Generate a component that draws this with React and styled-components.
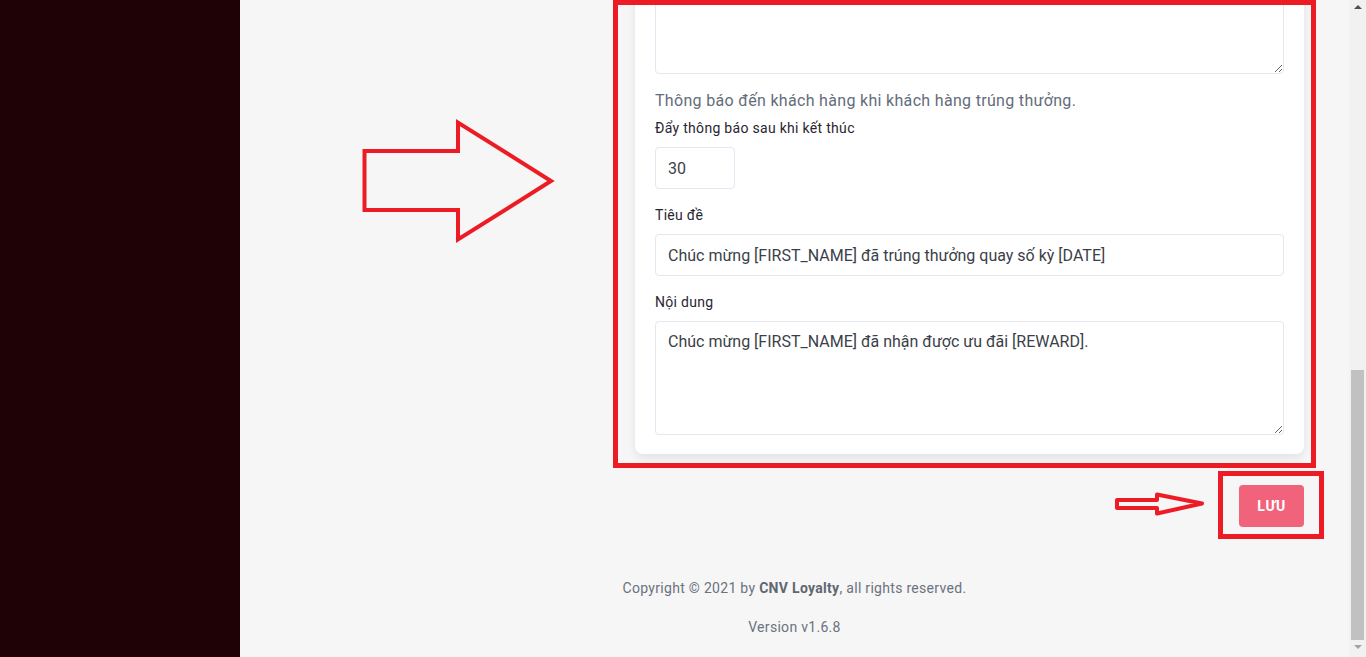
import React from "react";
import styled, { createGlobalStyle } from "styled-components";

const Global = createGlobalStyle`
  html, body { margin: 0; padding: 0; height: 100%; overflow: hidden; }
  body { font-family: Roboto, "Noto Sans", Arial, sans-serif; background: #f6f6f6; }
  * { box-sizing: border-box; }
`;

const Layout = styled.div`
  display: grid;
  grid-template-columns: 240px 1fr 17px;
  width: 1366px;
  height: 657px;
  overflow: hidden;
`;

const Sidebar = styled.aside`
  background: #1e0206;
`;

const Main = styled.main`
  position: relative;
  background: #f6f6f6;
  display: flex;
  flex-direction: column;
  overflow: hidden;
`;

const Scrolled = styled.div`
  margin-top: -60px;
  display: flex;
  flex-direction: column;
`;

const ContentGrid = styled.div`
  display: grid;
  grid-template-columns: 1fr 669px;
  padding: 0 45px 0 45px;
`;

const Card = styled.section`
  grid-column: 2;
  background: #fff;
  border-radius: 8px;
  box-shadow: 0 4px 10px rgba(0, 0, 0, 0.08);
  padding: 20px 20px 19px;
  display: flex;
  flex-direction: column;
`;

const TextArea = styled.textarea`
  display: block;
  width: 100%;
  height: ${(p) => p.$h}px;
  border: 1px solid #e3e7ef;
  border-radius: 4px;
  padding: 10px 12px;
  font-family: Roboto, "Noto Sans", Arial, sans-serif;
  font-size: 16px;
  line-height: 20px;
  color: #3b3f48;
  resize: vertical;
  outline: none;
  background: #fff;
`;

const Input = styled.input`
  display: block;
  width: ${(p) => p.$w || "100%"};
  height: 42px;
  border: 1px solid #e3e7ef;
  border-radius: 4px;
  padding: 0 12px;
  font-family: Roboto, "Noto Sans", Arial, sans-serif;
  font-size: 16px;
  color: #3b3f48;
  outline: none;
  background: #fff;
`;

const Helper = styled.div`
  margin-top: 15px;
  font-size: 16px;
  line-height: 24px;
  letter-spacing: 0.32px;
  color: #646c7a;
`;

const Label = styled.label`
  display: block;
  font-size: 14px;
  line-height: 21px;
  letter-spacing: 0.3px;
  color: #2a2530;
  margin-top: ${(p) => p.$mt || 0}px;
  margin-bottom: 8px;
`;

const Actions = styled.div`
  display: flex;
  justify-content: flex-end;
  padding: 31px 45px 0;
`;

const SaveButton = styled.button`
  width: 65px;
  height: 42px;
  border: none;
  border-radius: 4px;
  background: #f1637b;
  color: #fff;
  font-family: Roboto, "Noto Sans", Arial, sans-serif;
  font-weight: 700;
  font-size: 14px;
  letter-spacing: 0.6px;
  cursor: pointer;
`;

const Footer = styled.footer`
  display: flex;
  flex-direction: column;
  align-items: center;
  gap: 18px;
  padding-top: 51px;
  font-size: 14px;
  line-height: 21px;
  letter-spacing: 0.3px;
  color: #6b7280;
  b { font-weight: 700; color: #5f6672; }
`;

const RedBox = styled.div`
  position: absolute;
  left: ${(p) => p.$x}px;
  top: ${(p) => p.$y}px;
  width: ${(p) => p.$w}px;
  height: ${(p) => p.$h}px;
  border: 5px solid #ed1c24;
  pointer-events: none;
`;

const ArrowSvg = styled.svg`
  position: absolute;
  left: ${(p) => p.$x}px;
  top: ${(p) => p.$y}px;
  pointer-events: none;
  overflow: visible;
`;

const ScrollTrack = styled.div`
  background: #f1f1f1;
  display: flex;
  flex-direction: column;
  align-items: center;
  padding: 0 2px;
`;

const ScrollArrow = styled.div`
  width: 0;
  height: 0;
  border-left: 4px solid transparent;
  border-right: 4px solid transparent;
  ${(p) =>
    p.$up
      ? "border-bottom: 4px solid #505050; margin: 5px 0 0;"
      : "border-top: 4px solid #a3a3a3; margin: 5px 0 8px;"}
`;

const ScrollSpace = styled.div`
  flex: 1;
`;

const Thumb = styled.div`
  width: 13px;
  height: 270px;
  background: #c1c1c1;
`;

export default function App() {
  return (
    <>
      <Global />
      <Layout>
        <Sidebar />
        <Main>
          <Scrolled>
            <ContentGrid>
              <Card>
                <TextArea $h={114} defaultValue="" />
                <Helper>Thông báo đến khách hàng khi khách hàng trúng thưởng.</Helper>
                <Label $mt={5}>Đẩy thông báo sau khi kết thúc</Label>
                <Input $w="80px" defaultValue="30" />
                <Label $mt={16}>Tiêu đề</Label>
                <Input defaultValue="Chúc mừng [FIRST_NAME] đã trúng thưởng quay số kỳ [DATE]" />
                <Label $mt={16}>Nội dung</Label>
                <TextArea
                  $h={114}
                  defaultValue="Chúc mừng [FIRST_NAME] đã nhận được ưu đãi [REWARD]."
                />
              </Card>
            </ContentGrid>
            <Actions>
              <SaveButton>LƯU</SaveButton>
            </Actions>
            <Footer>
              <div>
                Copyright © 2021 by <b>CNV Loyalty</b>, all rights reserved.
              </div>
              <div>Version v1.6.8</div>
            </Footer>
          </Scrolled>

          <RedBox $x={373} $y={0} $w={703} $h={468} />
          <RedBox $x={978} $y={471} $w={106} $h={68} />

          <ArrowSvg $x={122} $y={120} width="192" height="122" viewBox="0 0 192 122">
            <polygon
              points="2.5,31 96,31 96,2.5 189,61 96,119.5 96,90 2.5,90"
              fill="none"
              stroke="#ed1c24"
              strokeWidth="4"
              strokeLinejoin="miter"
            />
          </ArrowSvg>
          <ArrowSvg $x={875} $y={492} width="90" height="24" viewBox="0 0 90 24">
            <polygon
              points="2,8 42,8 42,2.5 87,11.5 42,21.5 42,16 2,16"
              fill="none"
              stroke="#ed1c24"
              strokeWidth="4"
              strokeLinejoin="round"
            />
          </ArrowSvg>
        </Main>
        <ScrollTrack>
          <ScrollArrow $up />
          <ScrollSpace />
          <Thumb />
          <ScrollArrow />
        </ScrollTrack>
      </Layout>
    </>
  );
}
